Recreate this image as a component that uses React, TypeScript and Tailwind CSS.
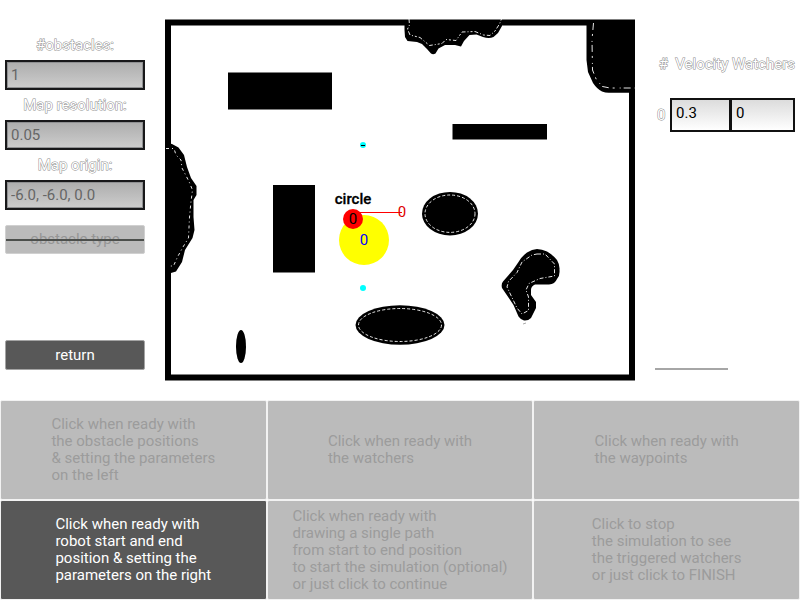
import React from "react";

const fields = [
  { id: "obstacles", label: "#obstacles:", value: "1" },
  { id: "resolution", label: "Map resolution:", value: "0.05" },
  { id: "origin", label: "Map origin:", value: "-6.0, -6.0, 0.0" },
];

const steps = [
  { text: "Click when ready with\nthe obstacle positions\n& setting the parameters\non the left", active: false },
  { text: "Click when ready with\nthe watchers", active: false },
  { text: "Click when ready with\nthe waypoints", active: false },
  { text: "Click when ready with\nrobot start and end\nposition & setting the\nparameters on the right", active: true },
  {
    text: "Click when ready with\ndrawing a single path\nfrom start to end position\nto start the simulation (optional)\nor just click to continue",
    active: false,
  },
  { text: "Click to stop\nthe simulation to see\nthe triggered watchers\nor just click to FINISH", active: false },
];

// White lettering with a thin grey outline around each glyph
const outlined =
  "text-white [-webkit-text-stroke:1px_#8c8c8c] [paint-order:stroke_fill] whitespace-pre";

function ParameterPanel() {
  return (
    <aside className="flex flex-col px-[5px] pt-[30px] pb-[30px]">
      {fields.map((f) => (
        <div key={f.id} className="flex flex-col">
          <label htmlFor={f.id} className={`h-[30px] text-center leading-[30px] ${outlined}`}>
            {f.label}
          </label>
          <input
            id={f.id}
            disabled
            defaultValue={f.value}
            className="h-[30px] w-full border-2 border-[#18181a] bg-linear-to-b from-[#adadad] to-[#cdcdcd] px-1 text-[#666] inset-shadow-[0_0_0_1px_#8f9092]"
          />
        </div>
      ))}
      <div className="relative mt-[15px]">
        <select
          aria-label="obstacle type"
          disabled
          className="h-[29px] w-full appearance-none rounded-xs border border-[#d0d0d0] bg-[#bbb] text-center text-[#969696] opacity-100 [text-align-last:center]"
        >
          <option>obstacle type</option>
        </select>
        <span className="absolute inset-x-[1px] top-[14px] h-[2px] bg-[#4c4f4c]" />
      </div>
      <button className="mt-auto h-[30px] rounded-xs border border-[#a4a4a4] bg-[#585858] text-white">
        return
      </button>
    </aside>
  );
}

function ObstacleMap() {
  return (
    <svg viewBox="165 19 470 362" className="h-auto w-full" role="img" aria-label="Map">
      <rect x="168" y="22.5" width="464" height="355" fill="#fff" stroke="#000" strokeWidth="6" />
      <path d="M404.500 22V30L405 37L407.500 41L417 42L422 44L427 49L431 53.500Q433 55 435.500 53.500L438.500 48.500L445 45H455L461 46.500L464 41L469.500 35L476.500 34.500L483 37Q489 39 493.500 37L498 33L502 26V22Z" />
      <path d="M586.500 22V60L588 72L593 83Q597 89 602 91.500Q606 93 610 92.700H635V20H586.500Z" />
      <path d="M167 143L172 144L178.500 147.500L184 155L187 167L191 178L196.500 186V195L193.500 200V217L194.500 230L192.500 238L185 250L182 262L176 271.500L171 273H167Z" />
      <path d="M537 249Q542 249 547 251.500Q553 255 557 260Q560 265 559.500 270Q560 276 557 279Q555 284 549 284.500H535Q531 286 531 290V295L536 302V308L531 318Q528 321 524 320.500Q521 320 518.500 316.500L513.500 305L502 288Q501 284 503 281.500L513 270L518.500 262Q522 256 527 252.500Q532 249 537 249Z" />
      <ellipse cx="450" cy="213.700" rx="28" ry="21.800" />
      <ellipse cx="400" cy="325" rx="44.500" ry="19.700" />
      <ellipse cx="241" cy="346.500" rx="5" ry="16.500" />
      <rect x="228" y="72.500" width="104" height="37" />
      <rect x="273" y="185" width="42" height="87.500" />
      <rect x="452.500" y="124" width="94.500" height="15.500" />

      <g fill="none" stroke="#fff" strokeWidth="0.9">
        <path strokeDasharray="4 2 1 2 2 2" d="M409 19L409.500 25L407.500 29L410 35L420 37.500L429.500 45.500L442 43.500L446 39.500L456 40.500L462 32L475 31.500L483.500 35L490 35.500L495 31L499.500 24L501.500 19" />
        <path strokeDasharray="7 4 2 5 1 3" d="M593.500 23L592 40L592.500 70L596.500 80L602.500 86.500L610 88H635" />
        <path strokeDasharray="3 3 1 3" d="M166 148.500H174L176 155L181 160L182 168L189 181.500L192.500 190L191 201.500L189.500 217L188.500 238L183 247L177.500 257L173.500 266H169" />
        <path strokeDasharray="4 2 1 2" d="M537 254H545L554.500 264V276L540 278.500L529 283.500L526 290L528.500 297V310.500L522 314L517 308L507 287L508.500 281.500L517 272.500L522 262L532 255Z" />
        <ellipse cx="450" cy="213.700" rx="25" ry="18.700" strokeDasharray="3 2" />
        <ellipse cx="400" cy="325" rx="41.500" ry="16.500" strokeDasharray="3 2" />
      </g>
      <path d="M523 324L526 323" stroke="#aaa" />

      <circle cx="364" cy="240" r="25" fill="#ff0" />
      <path d="M355 212.500H402" stroke="#f00" />
      <circle cx="353" cy="219" r="10" fill="#f00" />
      <circle cx="363" cy="145" r="3" fill="#0ff" />
      <path d="M361 145.500H365" stroke="#000" />
      <circle cx="363" cy="288" r="3" fill="#0ff" />
      <g fontSize="15" textAnchor="middle">
        <text x="353" y="204" fontWeight="500" stroke="#000" strokeWidth="0.3">circle</text>
        <text x="353" y="224">0</text>
        <text x="364" y="245" fill="#00f">0</text>
        <text x="402" y="217" fill="#d00">0</text>
      </g>
    </svg>
  );
}

function WatcherPanel() {
  const cell =
    "h-[34px] min-w-0 border-2 border-[#111] bg-linear-to-b from-[#dcdcdc] to-white px-1 pb-1 text-black";
  return (
    <aside className="flex flex-col pt-[49px] pr-[5px]">
      <h2 className={`text-right leading-[30px] ${outlined}`}>{"#  Velocity Watchers"}</h2>
      <div className="mt-[19px] flex items-center">
        <label htmlFor="velocity" className={`w-5 pl-[7px] ${outlined}`}>
          0
        </label>
        <input id="velocity" defaultValue="0.3" className={`${cell} w-[61px]`} />
        <input aria-label="Watcher" defaultValue="0" className={`${cell} -ml-px flex-1`} />
      </div>
      <hr className="mt-auto mb-[30px] ml-[5px] w-[73px] border-t-2 border-[#a6a6a6]" />
    </aside>
  );
}

export default function App() {
  return (
    <div className="min-h-screen bg-white font-[Roboto,sans-serif] text-[15px] leading-[17px]">
      <main className="grid grid-cols-[150px_1fr_150px]">
        <ParameterPanel />
        <div className="px-[15px] pt-[19px] pb-[19px]">
          <ObstacleMap />
        </div>
        <WatcherPanel />
      </main>
      <nav className="grid grid-cols-3">
        {steps.map((s) => (
          <button
            key={s.text}
            disabled={!s.active}
            className={`flex h-[100px] items-center justify-center rounded-xs border border-[#f2f2f2] ${
              s.active ? "bg-[#585858] text-white" : "bg-[#bbb] text-[#9c9c9c]"
            }`}
          >
            <span className="text-left whitespace-pre">{s.text}</span>
          </button>
        ))}
      </nav>
    </div>
  );
}
